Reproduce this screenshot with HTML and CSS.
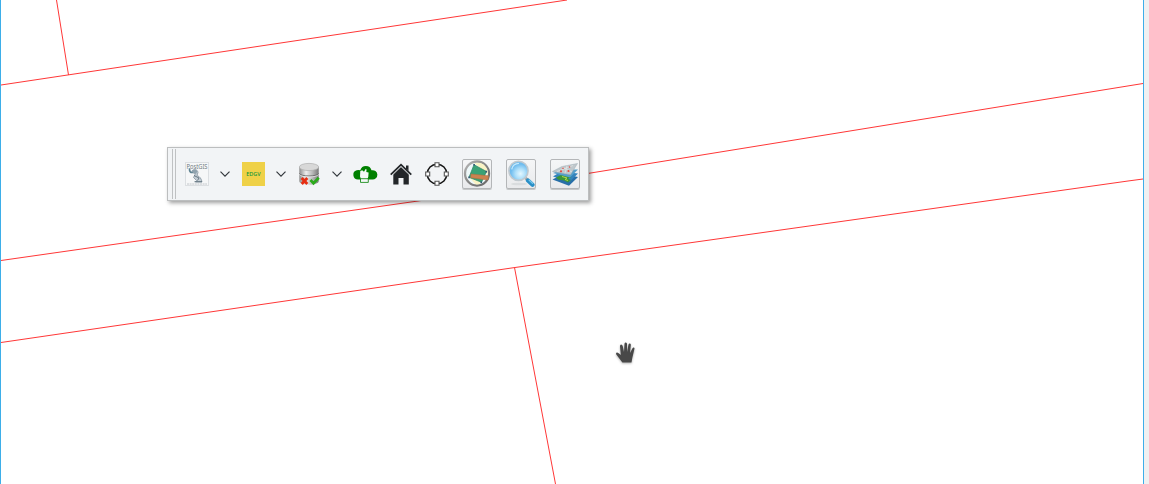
FILE: index.html
```html
<!DOCTYPE html>
<html lang="en">
<head>
<meta charset="utf-8">
<title>Map canvas</title>
<link rel="stylesheet" href="styles.css">
</head>
<body>
<main class="workspace">
  <section class="map">
    <svg class="features" width="1142" height="484" viewBox="1 0 1142 484">
      <path d="M56.500 0L68.500 75M1 85L567 0M1 260.500L418 201L1143 83.500M1 342.500L515 267.500L1128 181L1143 179M514.500 267.500L555.500 484"/>
    </svg>
  </section>
  <aside class="gutter"></aside>

  <div class="toolbar">
    <span class="grip"></span>
    <svg class="icon" viewBox="0 0 24 24">
      <rect x=".5" y=".5" width="23" height="23" fill="#f6f7f8" stroke="#dcdfe2"/>
      <text x="1.500" y="6.500" textLength="21" lengthAdjust="spacingAndGlyphs" font-size="7" fill="#6f7a82">PostGIS</text>
      <path d="M4.500 6.300C4.300 9.800 5.500 10.800 8.300 10.300" fill="none" stroke="#5f8392" stroke-width="1.700"/>
      <path d="M7 9C8.500 6.800 12.500 7 13 10.500L12 13.500C15 14.500 16.500 17 17 20H10.500L11.500 18.500L8.500 15.500L10 12.500Z" fill="#c5ced6" stroke="#8795a0" stroke-width=".8"/>
      <path d="M6.500 9.200Q9 6.500 12.500 9L11 12Q8 11.500 6.500 9.200" fill="#8fa2ae"/>
      <path d="M9 13.500L14 16L12.500 18.500M9.500 19.700H17" fill="none" stroke="#5c6e7b" stroke-width=".9"/>
      <path d="M2 22H22" stroke="#c2c6ca" stroke-width="1" stroke-dasharray="2 .6"/>
    </svg>
    <span class="drop"><svg viewBox="0 0 12 8"><path d="M1.500 1.700L6 6.200L10.500 1.700"/></svg></span>
    <span class="icon edgv">EDGV</span>
    <span class="drop"><svg viewBox="0 0 12 8"><path d="M1.500 1.700L6 6.200L10.500 1.700"/></svg></span>
    <svg class="icon" viewBox="0 0 24 24">
      <defs><linearGradient id="metal"><stop stop-color="#8c8c8c"/><stop offset=".35" stop-color="#eee"/><stop offset=".65" stop-color="#bdbdbd"/><stop offset="1" stop-color="#777"/></linearGradient></defs>
      <path d="M2.300 5V19C2.300 24 21.700 24 21.700 19V5Z" fill="url(#metal)"/>
      <ellipse cx="12" cy="5" rx="9.700" ry="3.600" fill="#d8d8d8" stroke="#adadad" stroke-width=".7"/>
      <path d="M2.300 11.500C4 14.800 20 14.800 21.700 11.500" fill="none" stroke="#666" stroke-width=".9"/>
      <path d="M2.300 12.500C4 15.800 20 15.800 21.700 12.500" fill="none" stroke="#eee" stroke-width=".7"/>
      <path d="M4.700 16L10.300 22M10.300 16L4.700 22" stroke="#e62e12" stroke-width="2.800"/>
      <path d="M13.500 18L16.500 21.300L21.800 15.800" fill="none" stroke="#2aaa1b" stroke-width="2.700"/>
    </svg>
    <span class="drop"><svg viewBox="0 0 12 8"><path d="M1.500 1.700L6 6.200L10.500 1.700"/></svg></span>
    <svg class="icon" viewBox="0 0 24 24">
      <path d="M5 17.500A4.700 4.700 0 0 1 3.700 8.300Q5 7.800 7.300 8.200A5.800 5.800 0 0 1 18.500 8.300A4.700 4.700 0 1 1 19 17.500Z" fill="#008000"/>
      <path d="M7.300 9L9.200 8.300L11 9.800L12.600 7L13.600 7.500L13.300 10L15.600 10.500L15.300 14.700L14.500 17H8L7 14.500Z" fill="#f5f7f8"/>
      <path d="M7.500 16.700H15.300V20.400H7.500Z" fill="#f5f7f8" stroke="#008000" stroke-width=".8"/>
    </svg>
    <svg class="icon home" viewBox="0 0 24 24">
      <path d="M12 4.500L19.800 12V22.500H14.500V16H9.500V22.500H4.300V12Z" fill="#232629"/>
      <path d="M17 3.500H19.500V9L17 6.500Z" fill="#232629"/>
      <path d="M1.700 12.700L12 2.700L22.300 12.700" fill="none" stroke="#232629" stroke-width="1.700"/>
      <path d="M3.300 13.200L12 4.900L20.700 13.200" fill="none" stroke="#d5d8da" stroke-width=".7"/>
    </svg>
    <svg class="icon" viewBox="0 0 24 24">
      <circle cx="12" cy="12" r="9.800" fill="none" stroke="#151515" stroke-width="1.500"/>
      <path d="M10 .7H14V4.700H10ZM10 19.300H14V23.300H10ZM.7 10H4.700V14H.7ZM19.300 10H23.300V14H19.300Z" fill="#fff" stroke="#555" stroke-width="1.100"/>
    </svg>
    <div class="buttons">
      <span class="button"><svg viewBox="0 0 28 28">
        <defs><linearGradient id="ring" x2="1" y2="1"><stop stop-color="#b8b8b8"/><stop offset=".5" stop-color="#858585"/><stop offset="1" stop-color="#666"/></linearGradient><clipPath id="disc"><circle cx="14" cy="13.500" r="11"/></clipPath></defs>
        <circle cx="14" cy="13.500" r="12" fill="#eef8f9" stroke="url(#ring)" stroke-width="2.300"/>
        <g clip-path="url(#disc)"><path d="M11 3L19 2L26 9L25 15Z" fill="#faf3c5"/><path d="M5 16L14 26L19 22Z" fill="#faf3c5"/></g>
        <path d="M11 4.700L23.500 11.500L18.500 22.300L6 17.300Z" fill="#3ba276" stroke="#258464" stroke-width=".7"/>
        <path d="M8 14L25.500 15.800L25 20L7.700 17.800Z" fill="#cc8350" stroke="#b66c3b" stroke-width=".5"/>
        <path d="M10.300 4h1.600v1.600h-1.600ZM22.500 10.800h1.600v1.600h-1.600ZM5.300 16.600h1.600v1.600h-1.600ZM17.500 21.600h1.600v1.600h-1.600Z" fill="#315575"/>
      </svg></span>
      <span class="button"><svg viewBox="0 0 28 28">
        <defs><radialGradient id="lens" cx=".6" cy=".65"><stop stop-color="#e4f7ff"/><stop offset=".5" stop-color="#b0e0fa"/><stop offset="1" stop-color="#6fbcee"/></radialGradient></defs>
        <ellipse cx="12" cy="24" rx="8" ry="1.300" fill="#d9dcde"/>
        <path d="M18 17.500L21 20.500" stroke="#a4a9ac" stroke-width="3"/>
        <path d="M21 20.500L25.500 24.800" stroke="#298fc7" stroke-width="4.200" stroke-linecap="round"/>
        <path d="M21.700 19.700L26 23.800" stroke="#78c8ec" stroke-width="1.200"/>
        <circle cx="11.500" cy="10.800" r="9.600" fill="url(#lens)" stroke="#c0c9cf" stroke-width="1.600"/>
        <path d="M4.700 9.300Q5.700 3.500 12 3.300" fill="none" stroke="#c5e9fc" stroke-width="1.200"/>
      </svg></span>
      <span class="button"><svg viewBox="0 0 28 28">
        <path d="M1.500 19.500L12 14L27 17L18 25.800Z" fill="#286fa8"/>
        <path d="M2 16.500L10 11.500L27 13.500L18.500 22Z" fill="#3384bd"/>
        <path d="M5 17.500L11 14.500L18 15.500L20.500 17L17 18.500L20 20L17 22.500L13 20.500L7 19.500Z" fill="#3b9638"/>
        <path d="M11 16.500L16 18L14 19.500L17 20.500" fill="none" stroke="#b4d54a" stroke-width="1"/>
        <path d="M2 13L11 9.500L27 9.500L19 17.500Z" fill="#559fca"/>
        <path d="M1.500 11.500L11 6.500L26.500 3.500L19.500 14.700Z" fill="#c0c8cc" stroke="#9daab2" stroke-width=".5"/>
        <path d="M6 11.500L22 5.500M11 7L21 12M16 5.500L14 13.500" stroke="#e2e6e7" stroke-width=".7"/>
        <g fill="#df4b42"><circle cx="10" cy="11.300" r="1.100"/><circle cx="12" cy="8.300" r=".8"/><circle cx="17.500" cy="11" r="1.100"/><circle cx="18.500" cy="7" r=".8"/></g>
      </svg></span>
    </div>
  </div>

  <svg class="cursor" width="24" height="26" viewBox="0 0 24 26">
    <path d="M8.400 22.500L2.300 14.500Q1.500 12.800 3.200 12.500Q4.300 12.500 6.800 15L6 6.200Q6 4.600 7.100 4.500Q8.300 4.500 8.700 6L10 12L10.500 3.800Q10.700 2.500 11.800 2.500Q13 2.600 13 4V12L14.500 4.500Q15 3.200 16 3.500Q17 3.800 16.800 5.200L16 13L18.500 8.200Q19.200 7 20 7.600Q20.800 8.100 20.300 9.500L18.300 18L17.500 22.500Z"/>
  </svg>
</main>
</body>
</html>
```
FILE: styles.css
```css
body {
  margin: 0;
  overflow: hidden;
  font-family: "Noto Sans", sans-serif;
}

.workspace {
  position: relative;
  display: flex;
  height: 484px;
}

.map {
  box-sizing: border-box;
  width: 1144px;
  height: 484px;
  border: solid #3daee9;
  border-width: 0 1px;
  background: #fff;
}

.features {
  display: block;
  fill: none;
  stroke: #ff3737;
  stroke-width: 1;
}

.gutter {
  flex: 1;
  background: #eff0f1;
}

/* Floating toolbar */
.toolbar {
  position: absolute;
  left: 167px;
  top: 147px;
  box-sizing: border-box;
  display: flex;
  align-items: center;
  width: 422px;
  height: 54px;
  padding-left: 4px;
  border: 1px solid #bcbebf;
  background: #f2f4f6;
  box-shadow: 2px 2px 4px rgba(0, 0, 0, .38);
}

.grip {
  box-sizing: border-box;
  width: 4px;
  height: 50px;
  margin-right: 9px;
  border: solid #bfc1c3;
  border-width: 0 1px;
}

.icon {
  display: block;
  flex: none;
  width: 24px;
  height: 24px;
  overflow: visible;
}

.icon + .icon {
  margin-left: 12px;
}

.edgv {
  box-sizing: border-box;
  width: 23px;
  margin-left: 1px;
  background: #efd148;
  color: #12973a;
  font-size: 5.500px;
  font-weight: 500;
  line-height: 24px;
  text-align: center;
}

.drop {
  display: flex;
  justify-content: center;
  width: 32px;
}

.drop svg {
  width: 12px;
  height: 8px;
  fill: none;
  stroke: #31363b;
  stroke-width: 1.150;
}

.buttons {
  display: flex;
  gap: 14px;
  margin-left: 13px;
}

.button {
  box-sizing: border-box;
  width: 30px;
  height: 30px;
  border: 1px solid #b4b6b8;
  border-radius: 2px;
  background: linear-gradient(#f5f6f7, #e9eaec);
  box-shadow: 0 1px 0 #c6c8c9;
}

.button svg {
  display: block;
  width: 28px;
  height: 28px;
}

.cursor {
  position: absolute;
  left: 614px;
  top: 340px;
  fill: #484848;
  filter: drop-shadow(0 1px 1px rgba(0, 0, 0, .3));
}
```
